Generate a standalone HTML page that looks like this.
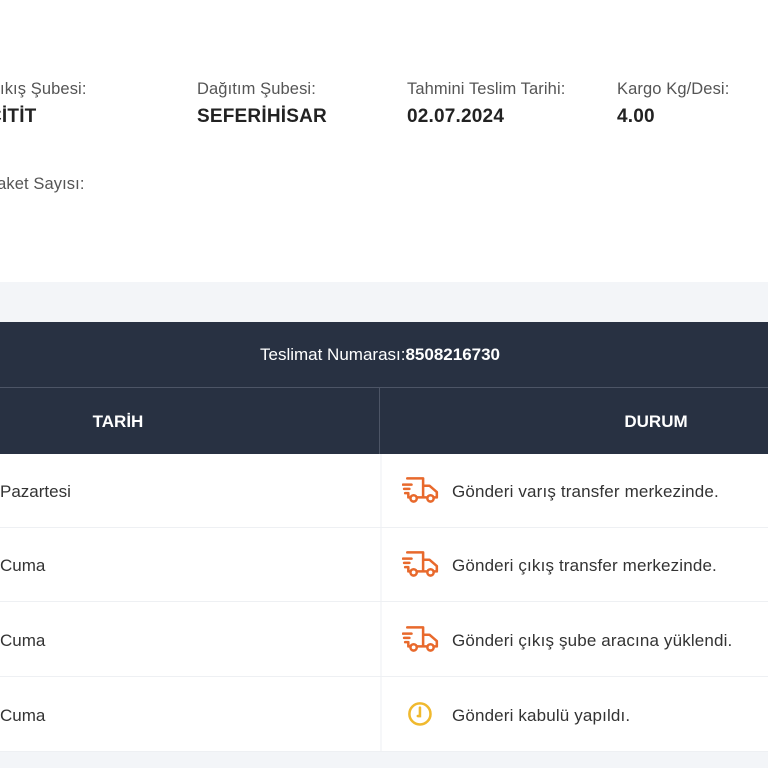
<!DOCTYPE html>
<html><head><meta charset="utf-8"><style>
*{margin:0;padding:0;box-sizing:border-box}
body{width:768px;height:768px;overflow:hidden;background:#fff;font-family:"Liberation Sans",sans-serif;color:#222;position:relative}
.a{position:absolute;white-space:nowrap}
.l{font-size:16.5px;color:#555;letter-spacing:0.1px}
.v{font-size:19px;font-weight:bold;color:#222;letter-spacing:0.2px}
.r{position:absolute;left:0;width:768px;height:74px;border-bottom:1px solid #eef0f3}
.r .d{position:absolute;left:0;top:28px;font-size:17px;color:#333}
.r .s{position:absolute;left:452px;top:28px;font-size:17px;color:#333;letter-spacing:0.15px}
.r svg{position:absolute;left:402px;top:22px}
</style></head><body>
<div class="a l" style="left:-12px;top:80px">Çıkış Şubesi:</div>
<div class="a v" style="left:-12px;top:106px">ÇİTİT</div>
<div class="a l" style="left:197px;top:80px">Dağıtım Şubesi:</div>
<div class="a v" style="left:197px;top:106px">SEFERİHİSAR</div>
<div class="a l" style="left:407px;top:80px">Tahmini Teslim Tarihi:</div>
<div class="a v" style="left:407px;top:106px">02.07.2024</div>
<div class="a l" style="left:617px;top:80px">Kargo Kg/Desi:</div>
<div class="a v" style="left:617px;top:106px">4.00</div>
<div class="a l" style="left:-14px;top:175px">Paket Sayısı:</div>
<div class="a" style="left:0;top:282px;width:768px;height:40px;background:#f3f5f8"></div>
<div class="a" style="left:0;top:322px;width:768px;height:132px;background:#283142"></div>
<div class="a" style="left:0;top:387px;width:768px;height:1px;background:#4d5566"></div>
<div class="a" style="left:379px;top:388px;width:1px;height:66px;background:#4d5566"></div>
<div class="a" style="left:0;top:345px;width:760px;text-align:center;color:#fff;font-size:17px">Teslimat Numarası:<b>8508216730</b></div>
<div class="a" style="left:0;top:412px;width:236px;text-align:center;color:#fff;font-size:17px;font-weight:bold">TARİH</div>
<div class="a" style="left:556px;top:412px;width:200px;text-align:center;color:#fff;font-size:17px;font-weight:bold">DURUM</div>
<div class="a" style="left:380px;top:454px;width:2px;height:298px;background:#f6f7f9"></div>
<div class="a" style="left:0;top:752px;width:768px;height:16px;background:#f3f5f8"></div>
<div class="r" style="top:454px"><div class="d">Pazartesi</div><svg width="38" height="30" viewBox="0 0 36 28" fill="none" stroke="#e8692c" stroke-width="2.4" stroke-linecap="round" stroke-linejoin="round"><path d="M5 2h15v18M20 9h6l7 6v5h-3M14 20h9M8 20H6v-3M1 8h8M2 12h5M3 16h3"/><circle cx="11" cy="21" r="3"/><circle cx="27" cy="21" r="3"/></svg><div class="s">Gönderi varış transfer merkezinde.</div></div>
<div class="r" style="top:528px"><div class="d">Cuma</div><svg width="38" height="30" viewBox="0 0 36 28" fill="none" stroke="#e8692c" stroke-width="2.4" stroke-linecap="round" stroke-linejoin="round"><path d="M5 2h15v18M20 9h6l7 6v5h-3M14 20h9M8 20H6v-3M1 8h8M2 12h5M3 16h3"/><circle cx="11" cy="21" r="3"/><circle cx="27" cy="21" r="3"/></svg><div class="s">Gönderi çıkış transfer merkezinde.</div></div>
<div class="r" style="top:603px"><div class="d">Cuma</div><svg width="38" height="30" viewBox="0 0 36 28" fill="none" stroke="#e8692c" stroke-width="2.4" stroke-linecap="round" stroke-linejoin="round"><path d="M5 2h15v18M20 9h6l7 6v5h-3M14 20h9M8 20H6v-3M1 8h8M2 12h5M3 16h3"/><circle cx="11" cy="21" r="3"/><circle cx="27" cy="21" r="3"/></svg><div class="s">Gönderi çıkış şube aracına yüklendi.</div></div>
<div class="r" style="top:678px"><div class="d">Cuma</div><svg width="38" height="30" viewBox="0 0 36 28" fill="none" stroke="#f0b92e" stroke-width="2.4" stroke-linecap="round"><circle cx="17" cy="13" r="10"/><path d="M17 7v8h-2"/></svg><div class="s">Gönderi kabulü yapıldı.</div></div>
</body></html>
